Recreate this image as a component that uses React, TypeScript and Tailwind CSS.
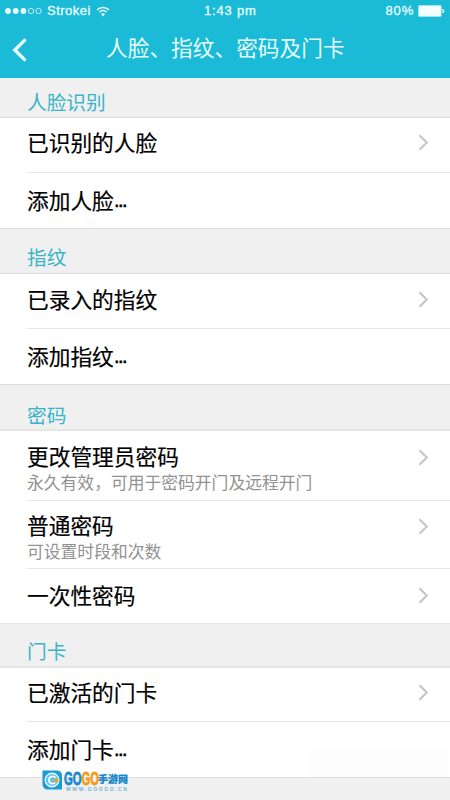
import React from 'react';

interface Row {
  title: string;
  subtitle?: string;
  more?: boolean;
  arrow?: boolean;
  className: string;
}

interface Section {
  label: string;
  labelClass: string;
  rows: Row[];
}

const sections: Section[] = [
  {
    label: '人脸识别',
    labelClass: 'h-[40px] pt-[9px] border-t border-t-[#e4fafb] border-b border-b-[#dedede]',
    rows: [
      { title: '已识别的人脸', arrow: true, className: 'h-[54px] pt-[8px]' },
      { title: '添加人脸', more: true, className: 'h-[55px] pt-[11px]' },
    ],
  },
  {
    label: '指纹',
    labelClass: 'h-[46px] pt-[14px] border-y border-[#dedede]',
    rows: [
      { title: '已录入的指纹', arrow: true, className: 'h-[54px] pt-[9px]' },
      { title: '添加指纹', more: true, className: 'h-[55px] pt-[11px]' },
    ],
  },
  {
    label: '密码',
    labelClass: 'h-[47px] pt-[16px] border-t border-t-[#dedede] border-b-2 border-b-[#e5e5e5]',
    rows: [
      { title: '更改管理员密码', subtitle: '永久有效，可用于密码开门及远程开门', arrow: true, className: 'h-[69px] pt-[9px]' },
      { title: '普通密码', subtitle: '可设置时段和次数', arrow: true, className: 'h-[67px] pt-[8px]' },
      { title: '一次性密码', arrow: true, className: 'h-[54px] pt-[10px]' },
    ],
  },
  {
    label: '门卡',
    labelClass: 'h-[45px] pt-[13px] border-t border-t-[#e5e5e5] border-b-2 border-b-[#e5e5e5]',
    rows: [
      { title: '已激活的门卡', arrow: true, className: 'h-[53px] pt-[8px]' },
      { title: '添加门卡', more: true, className: 'h-[55px] pt-[11px]' },
    ],
  },
];

const StatusBar = () => (
  <div className="relative flex h-[22px] items-center justify-between pl-[5px] pr-[5px] font-['Liberation_Sans',sans-serif] text-[13px]">
    <div className="flex items-center">
      <svg width="38" height="8" viewBox="0 0 38 8" fill="#e8fdff" stroke="#e8fdff">
        <circle cx="3" cy="4" r="2.9" stroke="none" />
        <circle cx="10.7" cy="4" r="2.9" stroke="none" />
        <circle cx="18.4" cy="4" r="2.9" stroke="none" />
        <circle cx="26" cy="4" r="2.7" fill="none" strokeWidth="0.8" />
        <circle cx="33.5" cy="4" r="2.7" fill="none" strokeWidth="0.8" />
      </svg>
      <span className="ml-[4px] w-[44px] tracking-[0.5px] [-webkit-text-stroke:0.3px]">Strokei</span>
      <svg className="ml-[5px]" width="14" height="11" viewBox="0 0 14 11" fill="none" stroke="#e8fdff" strokeWidth="1.6">
        <path d="M1 3.9C4.4.6 9.6.6 13 3.9" />
        <path d="M3.3 6.2C5.5 4.2 8.5 4.2 10.7 6.2" />
        <path d="M5 8C6.2 7 7.8 7 9 8L7 10.4Z" fill="#e8fdff" stroke="none" />
      </svg>
    </div>
    <span className="absolute left-[204px] tracking-[0.8px] [-webkit-text-stroke:0.3px]">1:43 pm</span>
    <div className="flex items-center">
      <span className="mr-[4px] tracking-[0.8px] [-webkit-text-stroke:0.3px]">80%</span>
      <svg width="27" height="12" viewBox="0 0 27 12">
        <rect x="0.4" y="0.4" width="22.8" height="11.2" rx="1.2" fill="#f4feff" stroke="#a5e9f1" strokeWidth="0.8" />
        <path d="M24.5 3.7C26.9 4.3 26.9 7.7 24.5 8.3Z" fill="#e8fdff" />
      </svg>
    </div>
  </div>
);

const Arrow = ({ low }: { low: boolean }) => (
  <svg
    className={`mr-[21px] shrink-0 ${low ? 'mt-[9px]' : 'mt-[8px]'}`}
    width="11"
    height="17"
    viewBox="0 0 11 17"
    fill="none"
    stroke="#c4c4c4"
    strokeWidth="2"
  >
    <path d="M1.5 1.2L8.8 8.5L1.5 15.8" />
  </svg>
);

const ListRow = ({ row, last }: { row: Row; last: boolean }) => (
  <div className="bg-white pl-[27px]">
    <div className={`flex items-start justify-between ${row.className}`}>
      <div>
        <div className="flex h-[32px] items-center whitespace-nowrap text-[21.7px] leading-[32px] text-black [-webkit-text-stroke:0.2px]">
          {row.title}
          {row.more && <span className="font-['Liberation_Sans',sans-serif] tracking-[-2px] [-webkit-text-stroke:0.4px]">...</span>}
        </div>
        {row.subtitle && (
          <div className="-mt-[2px] whitespace-nowrap text-[16.8px] leading-[24px] text-[#929292]">{row.subtitle}</div>
        )}
      </div>
      {row.arrow && <Arrow low={Boolean(row.subtitle)} />}
    </div>
    {!last && <div className="h-px bg-[#e6e6e6]" />}
  </div>
);

const Watermark = () => (
  <div className="absolute left-[42px] top-[769px] flex items-start">
    <svg width="21" height="22" viewBox="0 0 21 22">
      <path d="M0.5 1.5H15Q20 1.5 20 7V20.5H6Q0.5 20.5 0.5 14.5Z" fill="#1b9bd7" />
      <circle cx="10" cy="11" r="6.8" fill="#5bc4ee" stroke="#e9f8ff" strokeWidth="1.4" />
      <path d="M13.5 8.7C11.4 6.2 7 7.2 7 11C7 14.5 11 15.7 13 13.5" fill="none" stroke="#fff" strokeWidth="1.8" />
      <path d="M9.5 10.3H16.5V13.2H13.8Z" fill="#f7a31b" />
    </svg>
    <div className="ml-[1px] mt-[3px] w-[65px]">
      <div className="flex h-[14px] items-center whitespace-nowrap">
        <span className="flex w-[34px] shrink-0">
          <span className="origin-left scale-x-[0.61] font-['Liberation_Sans',sans-serif] text-[18.5px] font-bold leading-[14px] text-[#1689d2] [-webkit-text-stroke:0.8px]">
            GO<span className="text-[#f59a16]">GO</span>
          </span>
        </span>
        <span className="text-[10px] font-black leading-[14px] text-[#1787cb] [-webkit-text-stroke:0.2px]">手游网</span>
      </div>
      <div className="mt-px whitespace-nowrap pl-[2px] font-['Liberation_Sans',sans-serif] text-[5px] font-bold leading-[5px] tracking-[1.6px] text-[#72b5d9]">
        WWW.GOOGO.CN
      </div>
    </div>
  </div>
);

const App = () => {
  return (
    <div className="relative h-[800px] w-[450px] overflow-hidden bg-[#f0f0f0] font-['Noto_Sans_CJK_SC',sans-serif]">
      <header className="h-[78px] bg-[#1bbad6] text-[#e8fdff]">
        <StatusBar />
        <div className="flex h-[56px] items-start">
          <svg className="ml-[12px] mt-[16px]" width="16" height="24" viewBox="0 0 16 24" fill="none" stroke="#e8fdff" strokeWidth="3.4" strokeLinecap="round">
            <path d="M12.5 2.4L2.8 12L12.5 21.6" />
          </svg>
          <h1 className="ml-[78px] mt-[9px] whitespace-nowrap text-[21.7px] leading-[32px]">人脸、指纹、密码及门卡</h1>
        </div>
      </header>
      {sections.map((section) => (
        <section key={section.label}>
          <h2 className={`pl-[27px] text-[19.7px] leading-[28px] text-[#39b4c8] ${section.labelClass}`}>{section.label}</h2>
          {section.rows.map((row, i) => (
            <ListRow key={row.title} row={row} last={i === section.rows.length - 1} />
          ))}
        </section>
      ))}
      <div className="h-px bg-[#dedede]" />
      <div className="absolute left-[309px] top-[749px] h-[28px] w-[139px] bg-[#fdfdfd]" />
      <Watermark />
    </div>
  );
};

export default App;
